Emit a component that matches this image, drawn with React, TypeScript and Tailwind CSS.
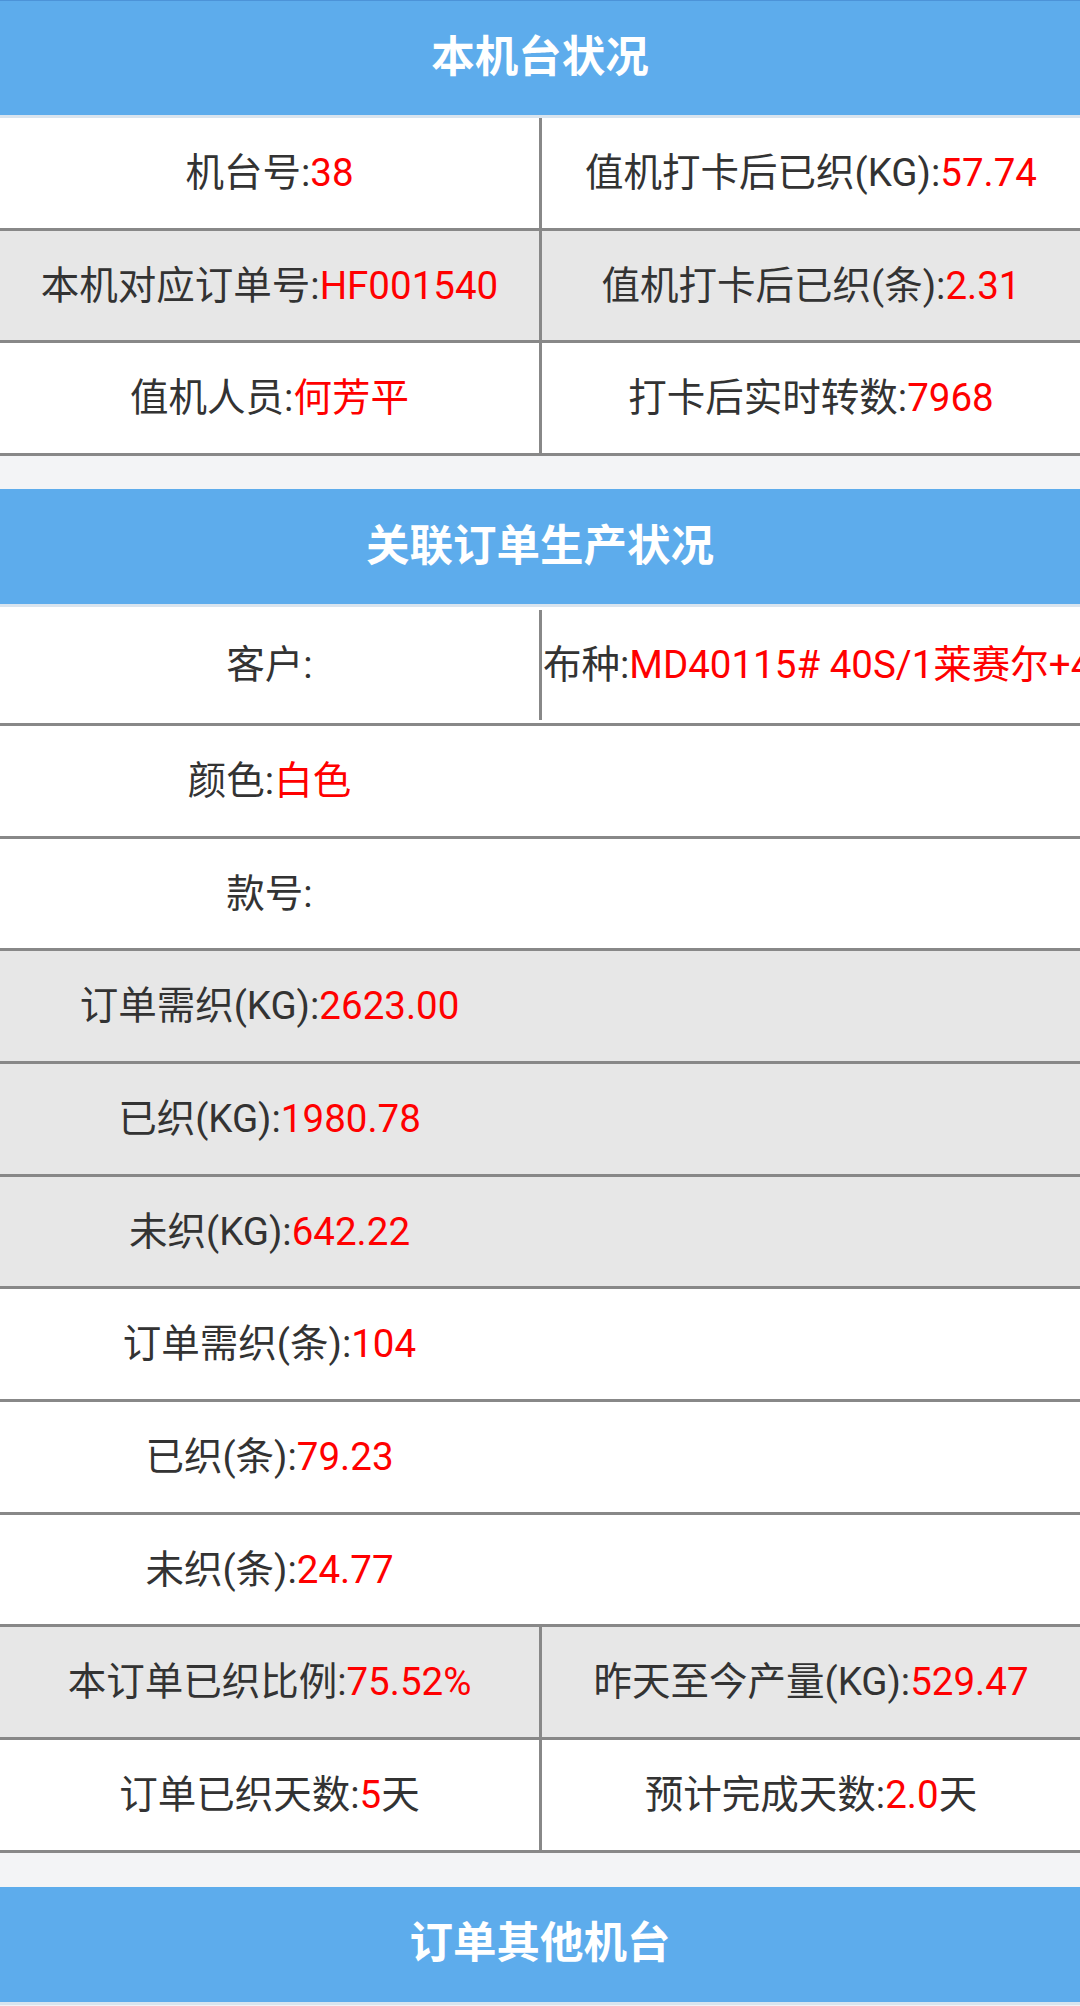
import React from "react";

type Cell = { label: string; value?: string; unit?: string; left?: boolean };
type Row = { cells: Cell[]; gray?: boolean; tall?: boolean };

const machineRows: Row[] = [
  {
    cells: [
      { label: "机台号:", value: "38" },
      { label: "值机打卡后已织(KG):", value: "57.74" },
    ],
  },
  {
    gray: true,
    cells: [
      { label: "本机对应订单号:", value: "HF001540" },
      { label: "值机打卡后已织(条):", value: "2.31" },
    ],
  },
  {
    cells: [
      { label: "值机人员:", value: "何芳平" },
      { label: "打卡后实时转数:", value: "7968" },
    ],
  },
];

const orderRows: Row[] = [
  {
    tall: true,
    cells: [
      { label: "客户:" },
      { label: "布种:", value: "MD40115# 40S/1莱赛尔+40D氨纶 汗布", left: true },
    ],
  },
  { cells: [{ label: "颜色:", value: "白色" }] },
  { cells: [{ label: "款号:" }] },
  { gray: true, cells: [{ label: "订单需织(KG):", value: "2623.00" }] },
  { gray: true, cells: [{ label: "已织(KG):", value: "1980.78" }] },
  { gray: true, cells: [{ label: "未织(KG):", value: "642.22" }] },
  { cells: [{ label: "订单需织(条):", value: "104" }] },
  { cells: [{ label: "已织(条):", value: "79.23" }] },
  { cells: [{ label: "未织(条):", value: "24.77" }] },
  {
    gray: true,
    cells: [
      { label: "本订单已织比例:", value: "75.52%" },
      { label: "昨天至今产量(KG):", value: "529.47" },
    ],
  },
  {
    cells: [
      { label: "订单已织天数:", value: "5", unit: "天" },
      { label: "预计完成天数:", value: "2.0", unit: "天" },
    ],
  },
];

function SectionHeader({ title, first }: { title: string; first?: boolean }) {
  return (
    <div
      className={`flex h-[118px] items-center justify-center border-b-[3px] border-[#d9e4ee] bg-[#5dacec] text-[43.5px] font-bold text-white ${
        first ? "border-t border-t-[#4c93d8]" : ""
      }`}
    >
      {title}
    </div>
  );
}

function CellText({ cell }: { cell: Cell }) {
  return (
    <span>
      {cell.label}
      {cell.value && <span className="text-[#ff0000]">{cell.value}</span>}
      {cell.unit}
    </span>
  );
}

function TableRow({ row }: { row: Row }) {
  const [a, b] = row.cells;
  return (
    <div
      className={`flex items-center border-b-[3px] border-[#888888] ${
        row.tall ? "h-[119px]" : "h-[112.67px]"
      } ${row.gray ? "bg-[#e7e7e7]" : "bg-white"}`}
    >
      <div className="flex h-[110px] w-[539px] shrink-0 items-center justify-center whitespace-nowrap">
        <CellText cell={a} />
      </div>
      {b && (
        <div
          className={`flex h-full min-w-0 flex-1 items-center overflow-hidden whitespace-nowrap border-l-[3px] border-[#888888] ${
            b.left ? "justify-start pl-[1px]" : "justify-center"
          } ${row.tall ? "!h-[110px]" : ""}`}
        >
          <CellText cell={b} />
        </div>
      )}
    </div>
  );
}

export default function App() {
  return (
    <div className="min-h-screen w-full overflow-hidden bg-[#f3f4f6] font-['Roboto','Noto_Sans_CJK_SC',sans-serif] text-[38.5px] text-[#333333]">
      <SectionHeader title="本机台状况" first />
      {machineRows.map((r, i) => (
        <TableRow key={i} row={r} />
      ))}

      <div className="h-[33px]" />

      <SectionHeader title="关联订单生产状况" />
      {orderRows.map((r, i) => (
        <TableRow key={i} row={r} />
      ))}

      <div className="h-[34px]" />

      <SectionHeader title="订单其他机台" />
    </div>
  );
}
